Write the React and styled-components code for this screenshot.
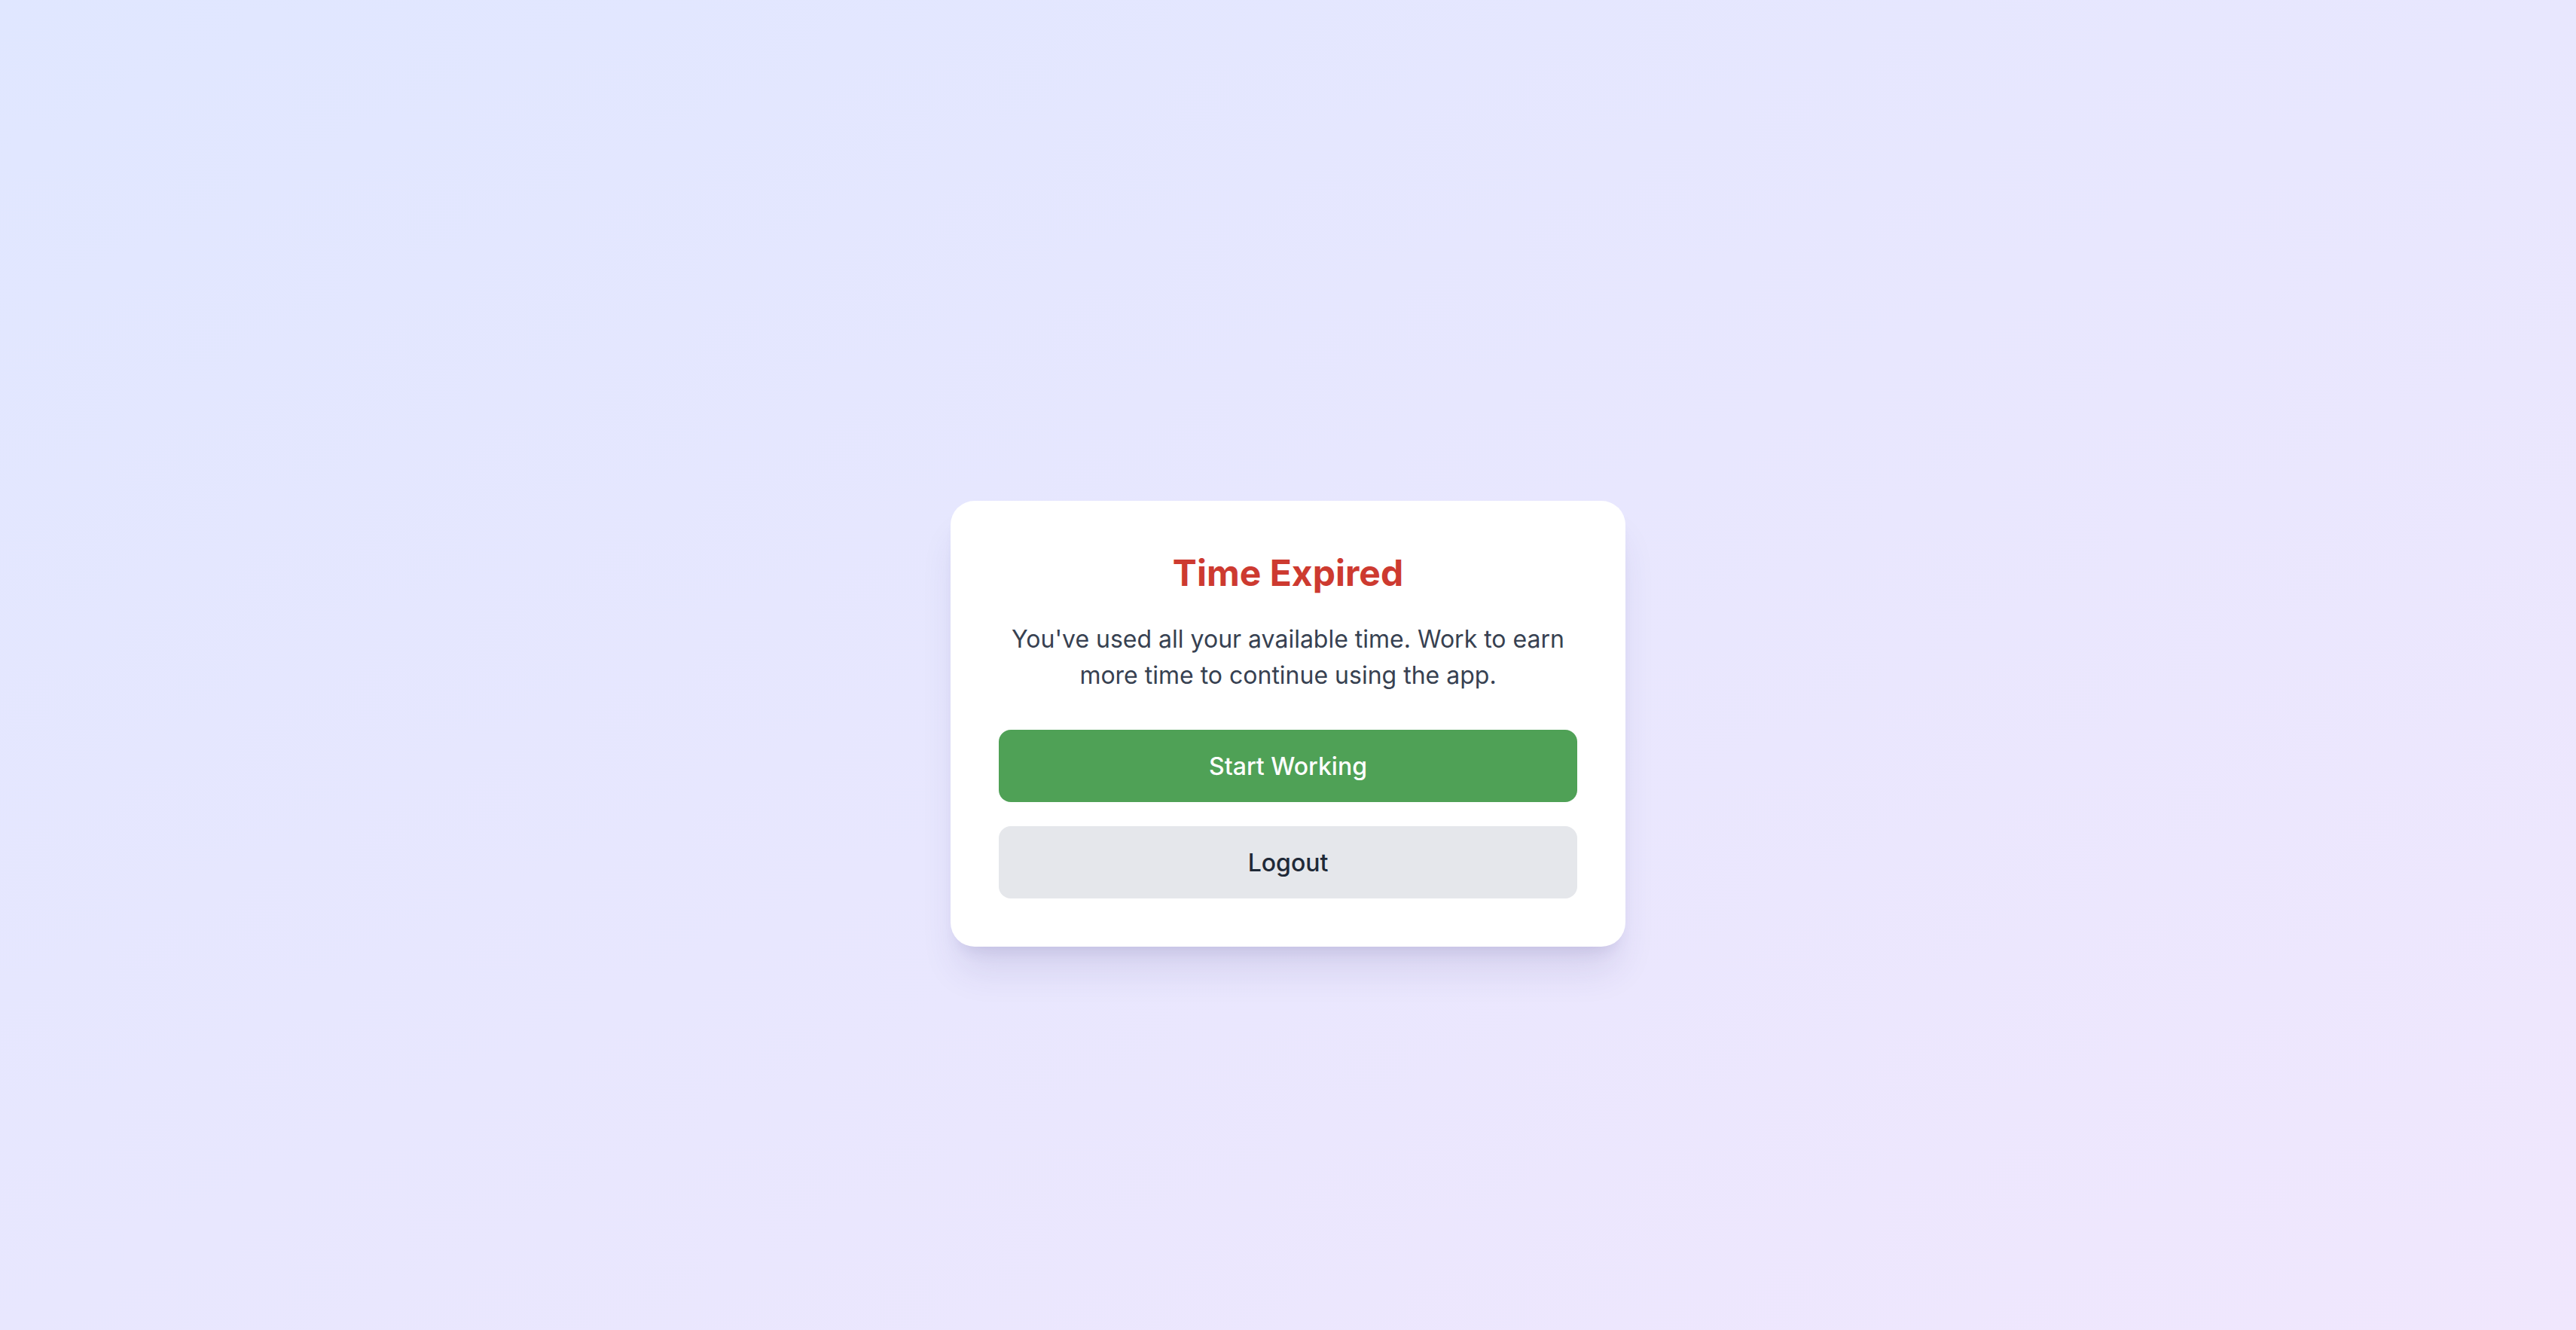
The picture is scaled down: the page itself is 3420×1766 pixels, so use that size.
import styled, { createGlobalStyle } from "styled-components";

const GlobalStyle = createGlobalStyle`
  * { box-sizing: border-box; }
  html, body { margin: 0; padding: 0; }
  body {
    font-family: Inter, "Noto Sans", sans-serif;
    -webkit-font-smoothing: antialiased;
  }
`;

export default function App() {
  return (
    <>
      <GlobalStyle />
      <Page>
        <Card>
          <Title>Time Expired</Title>
          <Message>
            You've used all your available time. Work to earn more time to
            continue using the app.
          </Message>
          <Actions>
            <Button $variant="primary">Start Working</Button>
            <Button>Logout</Button>
          </Actions>
        </Card>
      </Page>
    </>
  );
}

const Page = styled.div`
  min-height: 1766px;
  display: flex;
  align-items: center;
  justify-content: center;
  padding-top: 156px;
  background: linear-gradient(to bottom right, #e0e7ff, #f0e7fd);
`;

const Card = styled.div`
  width: 896px;
  background: #ffffff;
  border-radius: 32px;
  padding: 64px;
  text-align: center;
  box-shadow: 0 40px 50px -10px rgba(60, 50, 120, 0.12),
    0 16px 20px -12px rgba(60, 50, 120, 0.12);
`;

const Title = styled.h2`
  margin: 0 0 32px;
  font-size: 48px;
  line-height: 64px;
  font-weight: 700;
  color: #cd3a30;
`;

const Message = styled.p`
  margin: 0 0 48px;
  font-size: 32px;
  line-height: 48px;
  color: #374151;
`;

const Actions = styled.div`
  display: flex;
  flex-direction: column;
  gap: 32px;
`;

const Button = styled.button`
  height: 96px;
  width: 100%;
  border: none;
  border-radius: 16px;
  font-family: inherit;
  font-size: 32px;
  font-weight: 500;
  cursor: pointer;
  background: ${(p) => (p.$variant === "primary" ? "#4fa156" : "#e5e7eb")};
  color: ${(p) => (p.$variant === "primary" ? "#ffffff" : "#1f2937")};
`;
